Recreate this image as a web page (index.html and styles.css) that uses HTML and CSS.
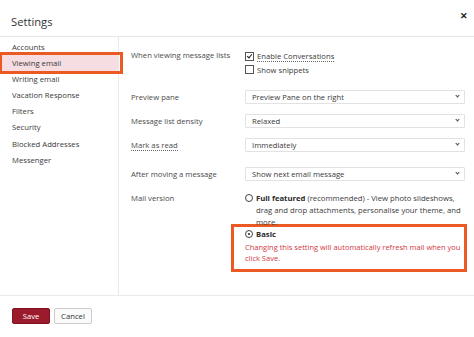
FILE: index.html
```html
<!DOCTYPE html>
<html lang="en">
    <head>
        <meta charset="UTF-8">
        <title>Settings</title>
        <link rel="stylesheet" href="styles.css">
    </head>
    <body>
        <div class="dialog">
            <div class="header">
                <h1>Settings</h1>
                <span class="close">&#x2715;</span>
            </div>
            <div class="main">
                <ul class="nav">
                    <li>Accounts</li>
                    <li class="active">Viewing email</li>
                    <li>Writing email</li>
                    <li>Vacation Response</li>
                    <li>Filters</li>
                    <li>Security</li>
                    <li>Blocked Addresses</li>
                    <li>Messenger</li>
                </ul>
                <div class="content">
                    <div class="row row-checks">
                        <div class="label">When viewing message lists</div>
                        <div class="control">
                            <label class="check"><span class="box checked"></span><span class="dotted">Enable Conversations</span></label>
                            <label class="check"><span class="box"></span>Show snippets</label>
                        </div>
                    </div>
                    <div class="row">
                        <div class="label">Preview pane</div>
                        <div class="control"><div class="select">Preview Pane on the right</div></div>
                    </div>
                    <div class="row">
                        <div class="label">Message list density</div>
                        <div class="control"><div class="select">Relaxed</div></div>
                    </div>
                    <div class="row row-gap">
                        <div class="label"><span class="dotted">Mark as read</span></div>
                        <div class="control"><div class="select">Immediately</div></div>
                    </div>
                    <div class="row">
                        <div class="label">After moving a message</div>
                        <div class="control"><div class="select">Show next email message</div></div>
                    </div>
                    <div class="row row-version">
                        <div class="label">Mail version</div>
                        <div class="control">
                            <div class="radio-opt">
                                <span class="radio"></span>
                                <div class="radio-text"><b>Full featured</b> (recommended) - View photo slideshows, drag and drop attachments, personalise your theme, and more.</div>
                            </div>
                            <div class="basic">
                                <div class="radio-opt">
                                    <span class="radio on"></span>
                                    <div class="radio-text"><b>Basic</b></div>
                                </div>
                                <p class="warn">Changing this setting will automatically refresh mail when you click Save.</p>
                            </div>
                        </div>
                    </div>
                </div>
            </div>
            <div class="footer">
                <button type="button" class="save">Save</button>
                <button type="button" class="cancel">Cancel</button>
            </div>
        </div>
    </body>
</html>
```

FILE: styles.css
```css
body {
    margin: 0;
    background: #fff;
    font-family: "Open Sans", "Noto Sans", sans-serif;
    font-size: 7.7px;
    color: #3a3a3a;
}
.dialog {
    width: 474px;
    height: 337px;
    display: flex;
    flex-direction: column;
}
.header {
    flex: none;
    height: 36px;
    border-bottom: 1px solid #e6e6e6;
    display: flex;
    justify-content: space-between;
    align-items: flex-start;
    padding: 0 6px 0 11px;
}
h1 {
    margin: 14px 0 0;
    font-weight: normal;
    font-size: 11.2px;
    color: #333;
}
.close {
    font-size: 9px;
    font-weight: bold;
    color: #222;
    margin-top: 9px;
}
.main {
    flex: none;
    display: flex;
    height: 258px;
    border-bottom: 1px solid #eaeaea;
}
.nav {
    flex: none;
    list-style: none;
    margin: 0;
    padding: 2px 0 0;
    width: 118px;
    border-right: 1px solid #eaeaea;
}
.nav li {
    height: 16.1px;
    line-height: 16.1px;
    padding-left: 12px;
}
.nav li.active {
    background: #f5dde1;
    position: relative;
}
.nav li.active::after {
    content: "";
    position: absolute;
    left: -1px;
    top: -3px;
    width: 118px;
    height: 16px;
    border: 3px solid #ea5a22;
}
.content {
    flex: 1;
    padding: 13px 0 0 12px;
}
.row {
    display: flex;
    align-items: center;
    margin-bottom: 10px;
}
.row-checks {
    align-items: flex-start;
    margin-bottom: 14px;
}
.row-gap {
    margin-bottom: 15px;
}
.label {
    flex: none;
    width: 114px;
    color: #4a4a4a;
}
.control {
    flex: none;
    width: 220px;
}
.check {
    display: flex;
    align-items: center;
    height: 13px;
}
.box {
    width: 7px;
    height: 7px;
    border: 1px solid #555;
    margin-right: 3px;
    position: relative;
}
.box.checked::after {
    content: "";
    position: absolute;
    left: 2px;
    top: 0;
    width: 2px;
    height: 4px;
    border: solid #222;
    border-width: 0 1.5px 1.5px 0;
    transform: rotate(40deg);
}
.dotted {
    border-bottom: 1px dotted #666;
    line-height: 9px;
}
.select {
    height: 12px;
    line-height: 12px;
    border: 1px solid #e2e2e2;
    border-radius: 1px;
    padding-left: 6px;
    position: relative;
    width: 212px;
}
.select::after {
    content: "";
    position: absolute;
    right: 5px;
    top: 3px;
    width: 2px;
    height: 2px;
    border: solid #444;
    border-width: 0 1.2px 1.2px 0;
    transform: rotate(45deg);
}
.row-version {
    align-items: flex-start;
    margin-top: 11px;
}
.row-version .label {
    line-height: 12px;
}
.radio-opt {
    display: flex;
    align-items: flex-start;
}
.radio {
    flex: none;
    width: 6px;
    height: 6px;
    border: 1px solid #444;
    border-radius: 50%;
    margin: 2px 3px 0 0;
    position: relative;
}
.radio.on::after {
    content: "";
    position: absolute;
    left: 2px;
    top: 2px;
    width: 2px;
    height: 2px;
    border-radius: 50%;
    background: #222;
}
.radio-text {
    line-height: 12px;
}
.radio-text b {
    color: #2a2a2a;
}
.basic {
    margin: -4px 0 0 -14px;
    border: 3px solid #ea5a22;
    padding: 1px 2px 5px 11px;
    width: 217px;
}
.warn {
    margin: 2px 0 0;
    color: #d0393f;
    font-size: 7.5px;
    line-height: 11px;
}
.footer {
    padding: 12px 12px;
    display: flex;
    gap: 4px;
}
button {
    font-family: inherit;
    font-size: 7.7px;
    height: 16px;
    width: 38px;
    border-radius: 2px;
    padding: 0;
    cursor: pointer;
}
.save {
    background: #9b1a2c;
    border: 1px solid #7d1322;
    color: #fff;
}
.cancel {
    background: #fafafa;
    border: 1px solid #ccc;
    color: #333;
}
```
